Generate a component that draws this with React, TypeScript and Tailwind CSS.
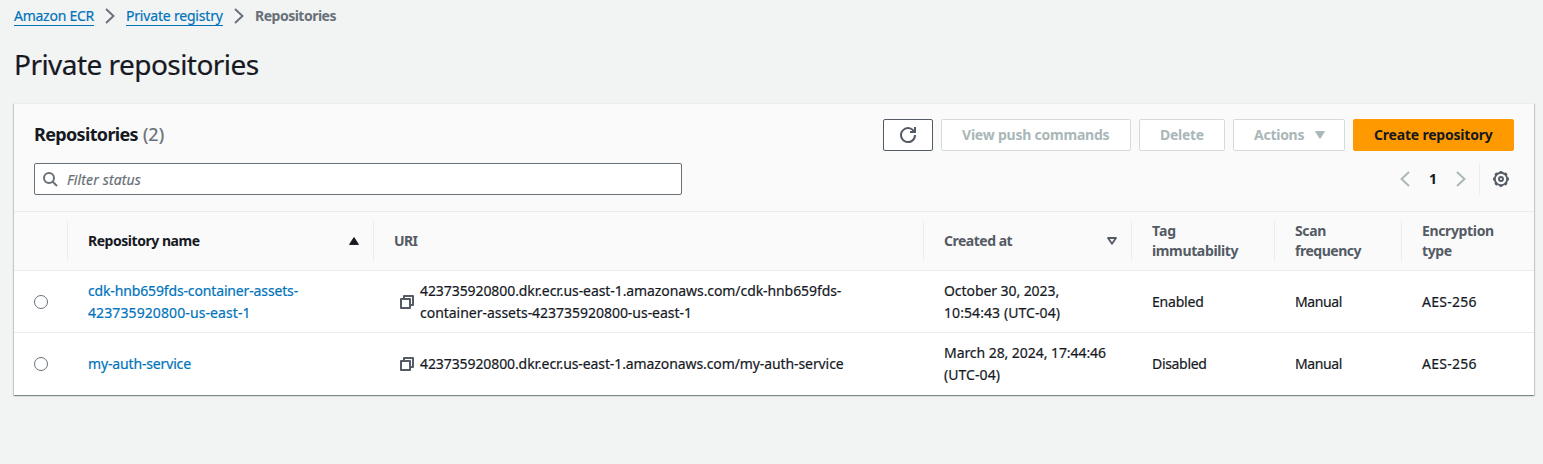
import { type ReactNode } from "react";
import clsx from "clsx";

function T({ c, children }: { c?: string; children: ReactNode }) {
  return <span className={clsx("whitespace-nowrap", c)}>{children}</span>;
}

function Chevron({ left, c }: { left?: boolean; c?: string }) {
  return (
    <svg viewBox="0 0 16 16" className={clsx("size-4 shrink-0 fill-none stroke-current stroke-[1.9]", c)}>
      <path d={left ? "M12 1 4.5 8l7.5 7" : "m4 1 7.5 7L4 15"} />
    </svg>
  );
}

function CopyIcon() {
  return (
    <svg viewBox="0 0 16 16" className="mr-[5px] size-4 shrink-0 fill-none stroke-[#545b64] stroke-2">
      <path d="M2 5h9v9H2zM5 5V2h9v9h-3" strokeLinejoin="round" />
    </svg>
  );
}

function GearIcon() {
  return (
    <svg viewBox="0 0 16 16" className="size-4 fill-none stroke-[#545b64]">
      <circle cx="8" cy="8" r="6.2" strokeWidth="1.9" />
      <circle cx="8" cy="8" r="7.3" strokeWidth="1.4" pathLength="16" strokeDasharray="1 1" strokeDashoffset="0.5" />
      <circle cx="8" cy="8" r="2" strokeWidth="1.9" />
    </svg>
  );
}

const grid = "grid grid-cols-[54px_306px_550px_208px_143px_127px_132px]";
const stroke = "[-webkit-text-stroke:0.2px_currentColor]";

function Head({ children, last, c }: { children?: ReactNode; last?: boolean; c?: string }) {
  return (
    <div className={clsx("my-[9px] flex h-10 items-center pl-5 font-bold leading-5", !last && "border-r border-[#eaeded]", c)}>
      {children}
    </div>
  );
}

const btn = "flex h-8 items-center rounded-[2px] border px-5 pb-[2px] font-bold";
const disabled = "border-[#d5dbdb] bg-white text-[#aab7b8]";

const rows = [
  {
    name: [
      ["cdk-hnb659fds-container-assets-", "tracking-[-0.145px]"],
      ["423735920800-us-east-1", "tracking-[0.1px]"],
    ],
    uri: [
      ["423735920800.dkr.ecr.us-east-1.amazonaws.com/cdk-hnb659fds-", "tracking-[-0.08px]"],
      ["container-assets-423735920800-us-east-1", "tracking-[-0.03px]"],
    ],
    date: [
      ["October 30, 2023,", "tracking-[-0.07px]"],
      ["10:54:43 (UTC-04)", "tracking-[0.08px]"],
    ],
    tag: "Enabled",
    tagTracking: "tracking-[-0.2px]",
  },
  {
    name: [["my-auth-service", "tracking-[-0.15px]"]],
    uri: [["423735920800.dkr.ecr.us-east-1.amazonaws.com/my-auth-service", "tracking-[-0.095px]"]],
    date: [
      ["March 28, 2024, 17:44:46", "tracking-[-0.06px]"],
      ["(UTC-04)", "tracking-[0.06px]"],
    ],
    tag: "Disabled",
    tagTracking: "tracking-[-0.32px]",
  },
] as const;

function Lines({ v }: { v: readonly (readonly [string, string])[] }) {
  return (
    <div className="flex flex-col items-start leading-[22px]">
      {v.map(([t, c]) => (
        <T key={t} c={c}>{t}</T>
      ))}
    </div>
  );
}

export default function App() {
  return (
    <div className="h-[464px] overflow-hidden bg-[#f2f3f3] pl-3.5 pr-[9px] font-['Noto_Sans','Open_Sans',sans-serif] text-[14px] text-[#16191f]">
      <nav className={clsx("flex h-8 items-center text-[#687078]", stroke)}>
        <a className="w-20 whitespace-nowrap border-b border-[#0073bb] leading-[18px] tracking-[-0.26px] text-[#0073bb]">Amazon ECR</a>
        <Chevron c="mx-2" />
        <a className="w-[97px] whitespace-nowrap border-b border-[#0073bb] leading-[18px] tracking-[-0.19px] text-[#0073bb]">Private registry</a>
        <Chevron c="mx-2" />
        <T c="pb-[2px] font-bold tracking-[-0.5px] [-webkit-text-stroke:0]">Repositories</T>
      </nav>
      <h1 className={clsx("mt-[14px] h-9 text-[28px] leading-9 tracking-[-0.54px]", stroke)}>Private repositories</h1>
      <section className="mt-[21px] border-t border-[#eaeded] bg-white shadow-[0_1px_1px_0_rgba(0,28,36,0.3),1px_1px_1px_0_rgba(0,28,36,0.15),-1px_1px_1px_0_rgba(0,28,36,0.15)]">
        <div className="h-[107px] bg-[#fafafa] px-5 pt-[15px]">
          <div className="flex h-8 items-center gap-2">
            <h2 className="mr-auto flex gap-[5px] pb-[2px] text-[18px] font-bold">
              <T c="tracking-[-0.66px]">Repositories</T>
              <T c={clsx("font-normal text-[#687078]", stroke)}>(2)</T>
            </h2>
            <button className="flex h-8 w-[50px] items-center justify-center rounded-[2px] border border-[#545b64] bg-white">
              <svg viewBox="0 0 16 16" className="size-4 fill-none stroke-[#545b64] stroke-2">
                <path d="M15 8a7 7 0 1 1-.7-3M10 5h5V0" />
              </svg>
            </button>
            <button className={clsx(btn, disabled, "w-[190px] tracking-[-0.22px]")}><T>View push commands</T></button>
            <button className={clsx(btn, disabled, "w-[86px] tracking-[-0.3px]")}><T>Delete</T></button>
            <button className={clsx(btn, disabled, "w-[112px] justify-between pr-[19px] tracking-[-0.26px]")}>
              <T>Actions</T>
              <svg viewBox="0 0 10 8" className="mt-[2px] h-2 w-2.5 fill-current stroke-current">
                <path d="M.6.6h8.8L5 7.4z" strokeLinejoin="round" />
              </svg>
            </button>
            <button className={clsx(btn, "w-[161px] border-[#ff9900] bg-[#ff9900] tracking-[-0.2px] text-[#16191f]")}><T>Create repository</T></button>
          </div>
          <div className="mt-3 flex h-8 items-center">
            <div className="mr-auto flex h-8 w-[648px] items-center gap-[9px] rounded-[2px] border border-[#687078] bg-white pl-[7px] text-[#687078]">
              <svg viewBox="0 0 16 16" className="size-4 fill-none stroke-current stroke-2">
                <circle cx="7" cy="7" r="5" />
                <path d="m15 15-4.5-4.5" />
              </svg>
              <T c={clsx("italic tracking-[0.14px]", stroke)}>Filter status</T>
            </div>
            <Chevron left c="text-[#aab7b8]" />
            <T c="w-10 pb-px text-center font-bold">1</T>
            <Chevron c="mr-[10px] text-[#aab7b8]" />
            <div className="flex h-8 w-[35px] items-center border-l border-[#eaeded] pl-[13px]">
              <GearIcon />
            </div>
          </div>
        </div>
        <div className={clsx(grid, "border-y border-[#eaeded] bg-[#fafafa] text-[#545b64]")}>
          <Head />
          <Head c="justify-between pr-[14px] text-[#16191f]">
            <T c="tracking-[-0.47px]">Repository name</T>
            <svg viewBox="0 0 10 8" className="h-2 w-2.5 fill-current stroke-current">
              <path d="M.6 7.4h8.8L5 .6z" strokeLinejoin="round" />
            </svg>
          </Head>
          <Head><T c="tracking-[-0.6px]">URI</T></Head>
          <Head c="justify-between pr-[14px]">
            <T c="tracking-[-0.5px]">Created at</T>
            <svg viewBox="0 0 10 8" className="h-2 w-2.5 fill-none stroke-current stroke-[1.8]">
              <path d="M1 1h8L5 6.8z" strokeLinejoin="round" />
            </svg>
          </Head>
          <Head><div><T>Tag</T><br /><T c="tracking-[-0.36px]">immutability</T></div></Head>
          <Head><div><T c="tracking-[-0.35px]">Scan</T><br /><T c="tracking-[-0.48px]">frequency</T></div></Head>
          <Head last><div><T c="tracking-[-0.36px]">Encryption</T><br /><T c="tracking-[-0.4px]">type</T></div></Head>
        </div>
        {rows.map((r) => (
          <div key={r.tag} className={clsx(grid, stroke, "h-[62px] items-center border-b border-[#eaeded] last:border-white")}>
            <div className="ml-5 size-[14px] rounded-full border border-[#687078] bg-white" />
            <div className="pl-5 text-[#0073bb]"><Lines v={r.name} /></div>
            <div className="flex items-center pl-[25px]"><CopyIcon /><Lines v={r.uri} /></div>
            <div className="pl-5"><Lines v={r.date} /></div>
            <div className="pl-5"><T c={r.tagTracking}>{r.tag}</T></div>
            <div className="pl-5"><T c="tracking-[-0.4px]">Manual</T></div>
            <div className="pl-5"><T c="tracking-[0.28px]">AES-256</T></div>
          </div>
        ))}
      </section>
    </div>
  );
}
